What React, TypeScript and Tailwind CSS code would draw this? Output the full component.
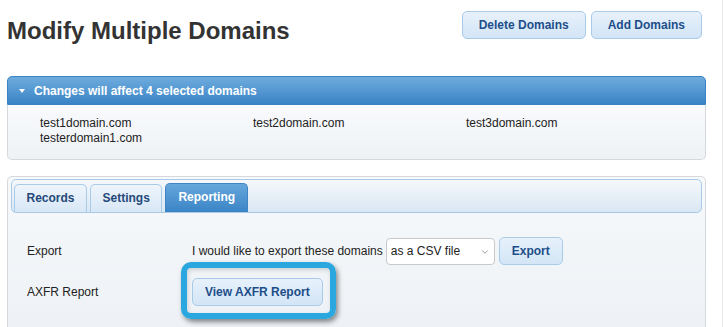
import { ChevronDown } from 'lucide-react'

const domains = ['test1domain.com', 'test2domain.com', 'test3domain.com', 'testerdomain1.com']
const tabs = ['Records', 'Settings', 'Reporting']

const btn =
  'rounded-[5px] border border-[#a8cbe9] bg-gradient-to-b from-[#e7f1fb] to-[#d3e5f6] text-[12px] font-bold text-[#1d4e89]'

export default function App() {
  return (
    <div className="min-h-[327px] border-r border-[#e8e8e8] bg-white font-['Liberation_Sans',Arial,sans-serif] text-[#222]">
      <div className="flex items-start justify-between pl-[7px] pr-[20px]">
        <h1 className="mt-[18px] text-[24px] leading-[26px] font-bold text-[#333]">Modify Multiple Domains</h1>
        <div className="mt-[11px] flex gap-[5px]">
          <button className={`${btn} h-[28px] px-4`}>Delete Domains</button>
          <button className={`${btn} h-[28px] px-4`}>Add Domains</button>
        </div>
      </div>

      {/* selected domains */}
      <div className="mt-[32px] ml-[7px] mr-[16px]">
        <div className="flex h-[29px] items-center rounded-t-[5px] border border-[#3a82c3] bg-gradient-to-b from-[#6eacdd] to-[#3983c6] pl-[11px] text-[12px] font-bold text-white">
          <span className="mr-[9px] h-0 w-0 border-x-[3.5px] border-t-[4px] border-x-transparent border-t-white" />
          Changes will affect 4 selected domains
        </div>
        <div className="grid grid-cols-[213px_213px_213px] rounded-b-[5px] border border-t-0 border-[#d5d9dd] bg-gradient-to-b from-[#f8fafc] to-[#eff2f5] pt-[11px] pb-[14px] pl-[32px] text-[12px] leading-[14.5px]">
          {domains.map(d => (
            <div key={d}>{d}</div>
          ))}
        </div>
      </div>

      {/* tabs panel */}
      <div className="mt-[16px] ml-[7px] mr-[16px] h-[160px] rounded-t-[5px] border border-[#d5d9dd] bg-gradient-to-b from-[#f7f9fb] to-[#edf1f5] px-[3px] pt-[2px]">
        <div className="flex h-[34px] items-end gap-[3px] rounded-[5px] border border-[#a8cae8] bg-gradient-to-b from-[#f5f8fb] to-[#d9e7f4] pl-[2px]">
          {tabs.map(t =>
            t === 'Reporting' ? (
              <div
                key={t}
                className="flex h-[29px] items-center rounded-t-[5px] border border-b-0 border-[#3d85c5] bg-gradient-to-b from-[#66a7dc] to-[#3a84c6] px-[12px] pb-[2px] text-[12px] font-bold text-white"
              >
                {t}
              </div>
            ) : (
              <div
                key={t}
                className="flex h-[28px] items-center rounded-t-[5px] border border-b-0 border-[#a9cbe8] bg-gradient-to-b from-[#eef5fb] to-[#d8e7f6] px-[11.5px] pb-[1px] text-[12px] font-bold text-[#24497a]"
              >
                {t}
              </div>
            )
          )}
        </div>

        <div className="pl-[16px] pt-[24px] text-[12px]">
          <div className="flex h-[28px] items-center">
            <div className="w-[165px]">Export</div>
            <span>I would like to export these domains</span>
            <div className="relative ml-[3px]">
              <select className="h-[27px] w-[109px] appearance-none rounded-[4px] border border-[#c9c9c9] bg-white pl-[4px] text-[12px] text-[#222] outline-none">
                <option>as a CSV file</option>
              </select>
              <ChevronDown className="pointer-events-none absolute right-[5px] top-[9px] h-[10px] w-[10px] text-[#888]" strokeWidth={2} />
            </div>
            <button className={`${btn} ml-[4px] h-[28px] px-3`}>Export</button>
          </div>

          <div className="mt-[13px] flex h-[28px] items-center">
            <div className="w-[165px]">AXFR Report</div>
            <div className="relative">
              <button className={`${btn} h-[28px] px-3`}>View AXFR Report</button>
              <div className="pointer-events-none absolute top-[-16px] left-[-11px] right-[-13px] bottom-[-13px] rounded-[10px] border-[6px] border-[#2aa7df] shadow-[2px_3px_5px_rgba(0,0,0,0.45),inset_1px_2px_4px_rgba(0,0,0,0.15)]" />
            </div>
          </div>
        </div>
      </div>
    </div>
  )
}
